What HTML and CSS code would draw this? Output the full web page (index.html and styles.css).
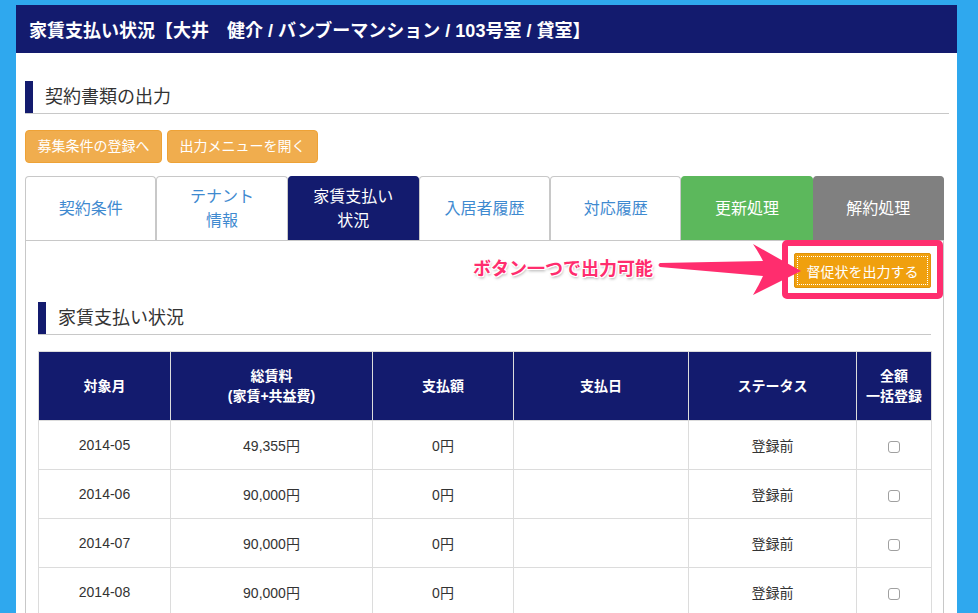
FILE: index.html
```html
<!DOCTYPE html>
<html lang="ja">
<head>
<meta charset="utf-8">
<title>家賃支払い状況</title>
<link rel="stylesheet" href="styles.css">
</head>
<body>
<div class="page">
  <div class="titlebar">家賃支払い状況【大井　健介 / バンブーマンション / 103号室 / 貸室】</div>
  <div class="content">
    <div class="section-title"><span>契約書類の出力</span></div>
    <div class="btn-row">
      <button class="btn-orange">募集条件の登録へ</button>
      <button class="btn-orange">出力メニューを開く</button>
    </div>
    <div class="tabs">
      <div class="tab">契約条件</div>
      <div class="tab">テナント<br>情報</div>
      <div class="tab tab-active">家賃支払い<br>状況</div>
      <div class="tab">入居者履歴</div>
      <div class="tab">対応履歴</div>
      <div class="tab tab-green">更新処理</div>
      <div class="tab tab-grey">解約処理</div>
    </div>
    <div class="panel">
      <div class="action-row">
        <button class="btn-dun">督促状を出力する</button>
      </div>
      <div class="section-title section-title-inner"><span>家賃支払い状況</span></div>
      <table class="pay-table">
        <colgroup>
          <col style="width:132px"><col style="width:202px"><col style="width:141px"><col style="width:175px"><col style="width:168px"><col style="width:75px">
        </colgroup>
        <thead>
          <tr>
            <th>対象月</th>
            <th>総賃料<br>(家賃+共益費)</th>
            <th>支払額</th>
            <th>支払日</th>
            <th>ステータス</th>
            <th>全額<br>一括登録</th>
          </tr>
        </thead>
        <tbody>
          <tr><td>2014-05</td><td>49,355円</td><td>0円</td><td></td><td>登録前</td><td><input type="checkbox" class="chk"></td></tr>
          <tr><td>2014-06</td><td>90,000円</td><td>0円</td><td></td><td>登録前</td><td><input type="checkbox" class="chk"></td></tr>
          <tr><td>2014-07</td><td>90,000円</td><td>0円</td><td></td><td>登録前</td><td><input type="checkbox" class="chk"></td></tr>
          <tr><td>2014-08</td><td>90,000円</td><td>0円</td><td></td><td>登録前</td><td><input type="checkbox" class="chk"></td></tr>
        </tbody>
      </table>

      <div class="annot-box"></div>
      <svg class="annot-arrow" width="150" height="58" viewBox="0 0 150 58" aria-hidden="true">
        <path d="M5,22 L108,20 Q104,12 98,3 L146,30 L98,54 Q104,44 108,35 L5,26 Q2,24 5,22 Z" fill="#ff2d6e"/>
      </svg>
      <div class="annot-text">ボタン一つで出力可能</div>
    </div>
  </div>
</div>
</body>
</html>
```

FILE: styles.css
```css
* { box-sizing: border-box; }

html, body {
  margin: 0;
  background: #2fa8ee;
}

body {
  padding: 5px 21px 0 16px;
  font-family: "Liberation Sans", "Noto Sans CJK JP", sans-serif;
  color: #333;
}

.page {
  background: #fff;
  min-height: 608px;
}

.titlebar {
  height: 48px;
  background: #131b6e;
  color: #fff;
  font-size: 18px;
  font-weight: bold;
  display: flex;
  align-items: center;
  padding-left: 13px;
  white-space: nowrap;
}

.content {
  padding: 28px 8px 0 9px;
}

.section-title {
  border-bottom: 1px solid #c8c8c8;
}

.section-title span {
  display: block;
  height: 32px;
  line-height: 32px;
  border-left: 8px solid #131b6e;
  padding-left: 12px;
  font-size: 18px;
  color: #333;
}

.btn-row {
  display: flex;
  gap: 5px;
  margin-top: 16px;
}

.btn-orange {
  height: 33px;
  padding: 0 11.5px;
  background: #f0ad4e;
  border: 1px solid #eea236;
  border-radius: 4px;
  color: #fff;
  font-family: inherit;
  font-size: 14px;
  line-height: 31px;
}

.tabs {
  display: flex;
  margin-top: 13px;
  width: 919px;
}

.tab {
  flex: 1;
  height: 64px;
  border: 1px solid #c8c8c8;
  border-bottom: none;
  border-radius: 4px 4px 0 0;
  display: flex;
  align-items: center;
  justify-content: center;
  text-align: center;
  font-size: 16px;
  line-height: 24px;
  color: #3f8ad0;
  background: #fff;
}

.tab-active {
  background: #131b6e;
  border-color: #131b6e;
  color: #fff;
}

.tab-green {
  background: #5cb85c;
  border-color: #5cb85c;
  color: #fff;
}

.tab-grey {
  background: #808080;
  border-color: #808080;
  color: #fff;
}

.panel {
  position: relative;
  width: 919px;
  border: 1px solid #c8c8c8;
  border-bottom: none;
  padding: 12px 12px 0 12px;
}

.action-row {
  display: flex;
  justify-content: flex-end;
}

.btn-dun {
  height: 35px;
  width: 137px;
  background: #f0a00e;
  border: 1px solid #e0920a;
  border-radius: 2px;
  color: #fff;
  font-family: inherit;
  font-size: 14px;
  outline: 1px dotted #fff;
  outline-offset: -4px;
  padding: 0;
}

.section-title-inner {
  margin-top: 14px;
}

.pay-table {
  margin-top: 16px;
  width: 893px;
  border-collapse: collapse;
  table-layout: fixed;
  font-size: 14px;
}

.pay-table th {
  height: 69px;
  background: #131b6e;
  color: #fff;
  font-weight: bold;
  line-height: 20px;
  border: 1px solid #dcdcdc;
  text-align: center;
  padding: 0;
}

.pay-table td {
  height: 49px;
  border: 1px solid #dcdcdc;
  text-align: center;
  color: #333;
  padding: 0;
}

.chk {
  appearance: none;
  -webkit-appearance: none;
  width: 12px;
  height: 12px;
  margin: 3px 0 0 0;
  border: 1px solid #a0a0a0;
  border-radius: 3px;
  background: #fff;
  vertical-align: middle;
}

/* annotation overlay */
.annot-box {
  position: absolute;
  left: 756px;
  top: -1px;
  width: 161px;
  height: 59px;
  border: 6px solid #ff2d6e;
  border-radius: 5px;
}

.annot-arrow {
  position: absolute;
  left: 629px;
  top: 0;
}

.annot-text {
  position: absolute;
  left: 447px;
  top: 16px;
  font-size: 18px;
  line-height: 24px;
  font-weight: bold;
  color: #ff2d6e;
  white-space: nowrap;
  text-shadow:
    1px 0 0 #fff, -1px 0 0 #fff, 0 1px 0 #fff, 0 -1px 0 #fff,
    1px 1px 0 #fff, -1px -1px 0 #fff, 1px -1px 0 #fff, -1px 1px 0 #fff,
    1px 2px 3px rgba(0,0,0,0.35);
}
```
